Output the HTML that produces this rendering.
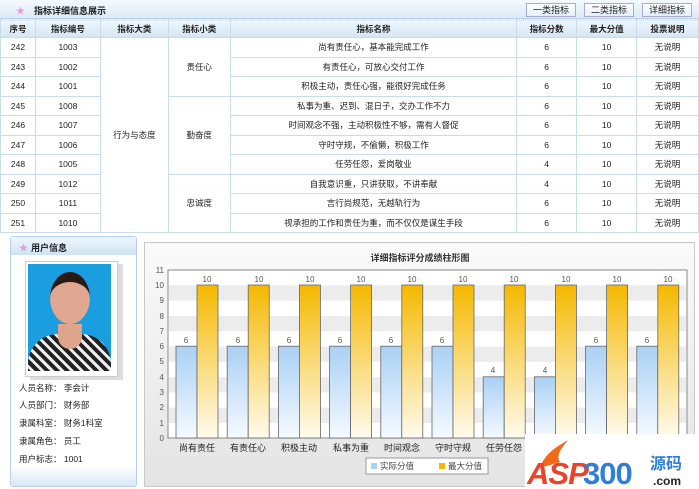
<!DOCTYPE html>
<html><head><meta charset="utf-8"><style>
*{margin:0;padding:0;box-sizing:border-box}
body{width:699px;height:489px;overflow:hidden;background:#fff;font-family:"Liberation Sans","Noto Sans CJK SC",sans-serif;font-size:9px;color:#222;position:relative}
.top{position:absolute;left:0;top:0;width:699px;height:19px;background:linear-gradient(#f4f9fd,#dbeaf6);border-bottom:1px solid #b9d3ea}
.top .t{position:absolute;left:34px;top:4px;font-weight:bold;font-size:9px}
.star{position:absolute;color:#e79ad8;font-size:9px}
.btn{position:absolute;top:3px;height:14px;width:50px;border:1px solid #aac;background:linear-gradient(#fff,#e4eef7);text-align:center;line-height:12px;font-size:9px}
table{position:absolute;left:0;top:19px;border-collapse:collapse;width:699px}
td,th{border:1px solid #c9dcec;text-align:center;height:19.5px;font-size:8.5px;font-weight:normal;border-top:1px dotted #c9dcec}
th{background:linear-gradient(#eef5fb,#d4e6f4);font-weight:bold;height:18px}
.up{position:absolute;left:10px;top:236px;width:127px;height:251px;border:1px solid #b5d0e8;border-radius:3px;background:#fff}
.up .h{height:18px;background:linear-gradient(#eef6fd,#cfe3f4);font-weight:bold;padding:4px 0 0 20px}
.up .f{position:absolute;left:0;bottom:0;width:125px;height:20px;background:linear-gradient(#fff,#d6e8f6)}
.info{position:absolute;left:8px;font-size:8.5px}
.cp{position:absolute;left:144px;top:242px;width:551px;height:245px;border:1px solid #c8c8c8;background:linear-gradient(#fafafa,#e4e4e4)}
</style></head><body>
<div class="top"><span class="star" style="left:16px;top:4px">★</span><span class="t">指标详细信息展示</span>
<div class="btn" style="left:526px">一类指标</div><div class="btn" style="left:584px">二类指标</div><div class="btn" style="left:642px">详细指标</div></div>
<table>
<colgroup><col style="width:35px"><col style="width:65px"><col style="width:68px"><col style="width:62px"><col style="width:287px"><col style="width:60px"><col style="width:60px"><col style="width:62px"></colgroup>
<tr><th>序号</th><th>指标编号</th><th>指标大类</th><th>指标小类</th><th>指标名称</th><th>指标分数</th><th>最大分值</th><th>投票说明</th></tr>
<tr><td>242</td><td>1003</td><td rowspan="10">行为与态度</td><td rowspan="3">责任心</td><td>尚有责任心，基本能完成工作</td><td>6</td><td>10</td><td>无说明</td></tr>
<tr><td>243</td><td>1002</td><td>有责任心，可放心交付工作</td><td>6</td><td>10</td><td>无说明</td></tr>
<tr><td>244</td><td>1001</td><td>积极主动，责任心强，能很好完成任务</td><td>6</td><td>10</td><td>无说明</td></tr>
<tr><td>245</td><td>1008</td><td rowspan="4">勤奋度</td><td>私事为重、迟到、混日子，交办工作不力</td><td>6</td><td>10</td><td>无说明</td></tr>
<tr><td>246</td><td>1007</td><td>时间观念不强，主动积极性不够，需有人督促</td><td>6</td><td>10</td><td>无说明</td></tr>
<tr><td>247</td><td>1006</td><td>守时守规，不偷懒，积极工作</td><td>6</td><td>10</td><td>无说明</td></tr>
<tr><td>248</td><td>1005</td><td>任劳任怨，爱岗敬业</td><td>4</td><td>10</td><td>无说明</td></tr>
<tr><td>249</td><td>1012</td><td rowspan="3">忠诚度</td><td>自我意识重，只讲获取，不讲奉献</td><td>4</td><td>10</td><td>无说明</td></tr>
<tr><td>250</td><td>1011</td><td>言行尚规范，无越轨行为</td><td>6</td><td>10</td><td>无说明</td></tr>
<tr><td>251</td><td>1010</td><td>视承担的工作和责任为重，而不仅仅是谋生手段</td><td>6</td><td>10</td><td>无说明</td></tr>
</table>
<div class="up"><div class="h"><span class="star" style="left:8px;top:4px">★</span>用户信息</div>
<div style="position:absolute;left:14px;top:24px;width:93px;height:116px;border:1px solid #ccc;background:#fff;box-shadow:5px 3px 0 #ddd"></div>
<div style="position:absolute;left:17px;top:27px;width:83px;height:107px;background:#1a9ee0;overflow:hidden">
<div style="position:absolute;left:22px;top:8px;width:40px;height:52px;border-radius:50%;background:#e0a890;border-top:10px solid #2a1a14"></div>
<div style="position:absolute;left:0;top:70px;width:83px;height:40px;border-radius:30px 30px 0 0;background:repeating-linear-gradient(45deg,#222 0 4px,#eee 4px 7px)"></div>
<div style="position:absolute;left:30px;top:60px;width:24px;height:25px;background:#dea58c;border-radius:0 0 12px 12px"></div></div>
<div class="info" style="top:145px">人员名称：&nbsp;李会计</div>
<div class="info" style="top:162px">人员部门：&nbsp;财务部</div>
<div class="info" style="top:180px">隶属科室：&nbsp;财务1科室</div>
<div class="info" style="top:198px">隶属角色：&nbsp;员工</div>
<div class="info" style="top:216px">用户标志：&nbsp;1001</div>
<div style="position:absolute;left:6px;top:233px;width:113px;border-top:1px dotted #bbb"></div>
<div class="f"></div></div>
<div class="cp"></div>
<svg style="position:absolute;left:0;top:0" width="699" height="489">
<defs><linearGradient id="b" x1="0" y1="0" x2="0" y2="1"><stop offset="0" stop-color="#a9d0f5"/><stop offset="1" stop-color="#f5faff"/></linearGradient>
<linearGradient id="y" x1="0" y1="0" x2="0" y2="1"><stop offset="0" stop-color="#f5b800"/><stop offset="1" stop-color="#fffbee"/></linearGradient></defs>
<text x="420" y="261" font-size="9" font-weight="bold" text-anchor="middle" fill="#333">详细指标评分成绩柱形图</text>
<rect x="168" y="270" width="519" height="168" fill="#fff" stroke="#888"/>
<g fill="#ececec">
<rect x="169" y="285.3" width="517" height="15.3"/><rect x="169" y="315.9" width="517" height="15.3"/><rect x="169" y="346.5" width="517" height="15.3"/><rect x="169" y="377.1" width="517" height="15.3"/><rect x="169" y="407.7" width="517" height="15.3"/></g>
<g font-size="8" fill="#555" text-anchor="end">
<text x="164" y="441">0</text><text x="164" y="426">1</text><text x="164" y="410">2</text><text x="164" y="395">3</text><text x="164" y="380">4</text><text x="164" y="364">5</text><text x="164" y="349">6</text><text x="164" y="334">7</text><text x="164" y="319">8</text><text x="164" y="303">9</text><text x="164" y="288">10</text><text x="164" y="273">11</text></g>
<g stroke="#666" stroke-width="0.8">
<rect x="176" y="346.2" width="21" height="91.8" fill="url(#b)"/><rect x="197" y="285" width="21" height="153" fill="url(#y)"/>
<rect x="227.2" y="346.2" width="21" height="91.8" fill="url(#b)"/><rect x="248.2" y="285" width="21" height="153" fill="url(#y)"/>
<rect x="278.4" y="346.2" width="21" height="91.8" fill="url(#b)"/><rect x="299.4" y="285" width="21" height="153" fill="url(#y)"/>
<rect x="329.6" y="346.2" width="21" height="91.8" fill="url(#b)"/><rect x="350.6" y="285" width="21" height="153" fill="url(#y)"/>
<rect x="380.8" y="346.2" width="21" height="91.8" fill="url(#b)"/><rect x="401.8" y="285" width="21" height="153" fill="url(#y)"/>
<rect x="432" y="346.2" width="21" height="91.8" fill="url(#b)"/><rect x="453" y="285" width="21" height="153" fill="url(#y)"/>
<rect x="483.2" y="376.8" width="21" height="61.2" fill="url(#b)"/><rect x="504.2" y="285" width="21" height="153" fill="url(#y)"/>
<rect x="534.4" y="376.8" width="21" height="61.2" fill="url(#b)"/><rect x="555.4" y="285" width="21" height="153" fill="url(#y)"/>
<rect x="585.6" y="346.2" width="21" height="91.8" fill="url(#b)"/><rect x="606.6" y="285" width="21" height="153" fill="url(#y)"/>
<rect x="636.8" y="346.2" width="21" height="91.8" fill="url(#b)"/><rect x="657.8" y="285" width="21" height="153" fill="url(#y)"/></g>
<g font-size="8" fill="#555" text-anchor="middle">
<text x="186" y="343">6</text><text x="207" y="282">10</text><text x="238" y="343">6</text><text x="259" y="282">10</text><text x="289" y="343">6</text><text x="310" y="282">10</text><text x="340" y="343">6</text><text x="361" y="282">10</text><text x="391" y="343">6</text><text x="412" y="282">10</text><text x="442" y="343">6</text><text x="463" y="282">10</text><text x="493" y="373">4</text><text x="514" y="282">10</text><text x="545" y="373">4</text><text x="566" y="282">10</text><text x="596" y="343">6</text><text x="617" y="282">10</text><text x="647" y="343">6</text><text x="668" y="282">10</text></g>
<g font-size="9" fill="#222" text-anchor="middle">
<text x="197" y="451">尚有责任</text><text x="248" y="451">有责任心</text><text x="299" y="451">积极主动</text><text x="351" y="451">私事为重</text><text x="402" y="451">时间观念</text><text x="453" y="451">守时守规</text><text x="504" y="451">任劳任怨</text></g>
<rect x="366" y="458" width="122" height="16" fill="#fff" stroke="#999"/>
<rect x="371" y="463" width="6" height="6" fill="#a9d0f5"/><text x="380" y="469" font-size="8.5" fill="#444">实际分值</text>
<rect x="439" y="463" width="6" height="6" fill="#f5b800"/><text x="448" y="469" font-size="8.5" fill="#444">最大分值</text>
<rect x="525" y="434" width="170" height="55" fill="#fff"/>
<path d="M540 468 C545 452 560 445 568 440 C560 450 556 456 560 462 Z" fill="#f06a1a"/>
<text x="527" y="484" font-size="31" font-weight="bold" font-style="italic" fill="#e8442a" font-family="Liberation Sans,sans-serif" letter-spacing="-1">ASP</text>
<text x="583" y="484" font-size="31" font-weight="bold" fill="#2f7fd8" font-family="Liberation Sans,sans-serif" letter-spacing="-1">300</text>
<text x="650" y="469" font-size="16" font-weight="bold" fill="#2f7fd8">源码</text>
<text x="653" y="485" font-size="12" font-weight="bold" fill="#222">.com</text>
</svg>
</body></html>
